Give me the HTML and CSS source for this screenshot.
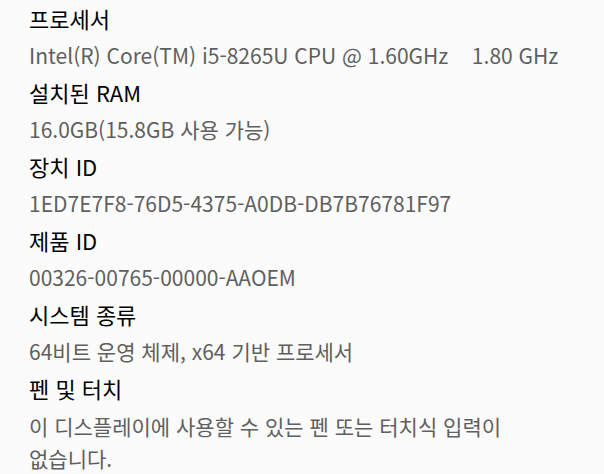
FILE: index.html
```html
<!DOCTYPE html>
<html lang="ko">
<head>
  <meta charset="UTF-8" />
  <title>장치 사양</title>
  <link rel="stylesheet" href="styles.css">
</head>
<body>
  <dl class="specs">
    <dt>프로세서</dt>
    <dd class="nowrap">Intel(R) Core(TM) i5-8265U CPU @ 1.60GHz&nbsp;&nbsp;&nbsp;&nbsp;1.80 GHz</dd>
    <dt>설치된 RAM</dt>
    <dd>16.0GB(15.8GB 사용 가능)</dd>
    <dt>장치 ID</dt>
    <dd>1ED7E7F8-76D5-4375-A0DB-DB7B76781F97</dd>
    <dt>제품 ID</dt>
    <dd>00326-00765-00000-AAOEM</dd>
    <dt>시스템 종류</dt>
    <dd>64비트 운영 체제, x64 기반 프로세서</dd>
    <dt>펜 및 터치</dt>
    <dd class="multi">이 디스플레이에 사용할 수 있는 펜 또는 터치식 입력이 없습니다.</dd>
  </dl>
</body>
</html>
```

FILE: styles.css
```css
body {
  margin: 0;
  background: #fbfbfb;
  font-family: "Noto Sans CJK KR", "Noto Sans", sans-serif;
}

.specs {
  margin: 0;
  padding: 0 0 0 29px;
  width: 530px;
}

dt {
  height: 37px;
  line-height: 37px;
  font-size: 22px;
  color: #000;
}

dd {
  margin: 0;
  min-height: 37px;
  line-height: 37px;
  font-size: 21px;
  color: #5f5f5f;
  word-break: keep-all;
}

.nowrap {
  white-space: nowrap;
}

.multi {
  padding-top: 3px;
  line-height: 32px;
}
```
